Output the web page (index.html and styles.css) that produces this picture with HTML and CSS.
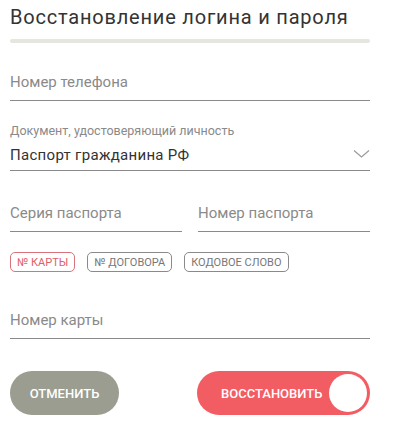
FILE: index.html
```html
<!DOCTYPE html>
<html lang="ru">
  <head>
    <meta charset="UTF-8">
    <meta name="viewport" content="width=device-width, initial-scale=1.0">
    <title>Восстановление логина и пароля</title>
    <link rel="stylesheet" href="styles.css">
  </head>
  <body>
    <div id="all">
      <h1>Восстановление логина и пароля</h1>
      <div class="bar"></div>

      <div class="field field-phone">
        <input type="text" class="inp" placeholder="Номер телефона">
      </div>

      <div class="field field-select">
        <div class="small-label">Документ, удостоверяющий личность</div>
        <div class="select">
          <span>Паспорт гражданина РФ</span>
          <svg class="chevron" width="17" height="8" viewBox="0 0 17 8"><path d="M1 0.5 L8.5 7 L16 0.5" fill="none" stroke="#9a9a9a" stroke-width="1.2"/></svg>
        </div>
      </div>

      <div class="row">
        <div class="field">
          <input type="text" class="inp" placeholder="Серия паспорта">
        </div>
        <div class="field">
          <input type="text" class="inp" placeholder="Номер паспорта">
        </div>
      </div>

      <div class="chips">
        <button class="chip active">№ КАРТЫ</button>
        <button class="chip">№ ДОГОВОРА</button>
        <button class="chip">КОДОВОЕ СЛОВО</button>
      </div>

      <div class="field field-card">
        <input type="text" class="inp" placeholder="Номер карты">
      </div>

      <div class="buttons">
        <button class="btn-cancel">ОТМЕНИТЬ</button>
        <button class="btn-restore">ВОССТАНОВИТЬ<span class="knob"></span></button>
      </div>
    </div>
  </body>
</html>
```

FILE: styles.css
```css
*{
margin:0;
padding:0;
box-sizing:border-box;
}

body{
    background-color:#fff;
    color:#333;
    font-family:Roboto, "Noto Sans", sans-serif;
}

#all{
    width:360px;
    margin-left:10px;
}

h1{
    font-size:20px;
    font-weight:400;
    color:#333;
    line-height:24px;
    padding-top:5px;
    letter-spacing:0.8px;
}

.bar{
    height:4px;
    background-color:#e6e6df;
    border-radius:2px;
    margin-top:10px;
}

.field{
    border-bottom:1px solid #8a8a8a;
}

.inp{
    display:block;
    width:100%;
    border:none;
    outline:none;
    background:none;
    font-family:inherit;
    font-size:15px;
    color:#333;
    height:30px;
    line-height:24px;
    padding:0 0 6px 0;
}

.inp::placeholder{
    color:#8a8a8a;
}

.field-phone{
    margin-top:27px;
}

.field-select{
    margin-top:23px;
}

.small-label{
    font-size:12.5px;
    color:#8a8a8a;
    line-height:14px;
}

.select{
    display:flex;
    justify-content:space-between;
    align-items:center;
    height:24px;
    margin:5px 0 3px 0;
    font-size:15px;
    letter-spacing:0.3px;
    color:#333;
}

.chevron{
    margin-top:-3px;
}

.row{
    display:flex;
    gap:16px;
    margin-top:30px;
}

.row .field{
    flex:1;
}

.chips{
    display:flex;
    gap:12px;
    margin-top:20px;
}

.chip{
    background:#fff;
    border:1px solid #8a8a8a;
    border-radius:5px;
    color:#777;
    font-family:inherit;
    font-size:11px;
    height:20px;
    padding:0 6px;
    cursor:pointer;
}

.chip.active{
    border-color:#d9737b;
    color:#e0606a;
}

.field-card{
    margin-top:36px;
}

.buttons{
    display:flex;
    justify-content:space-between;
    margin-top:32px;
}

.btn-cancel,
.btn-restore{
    height:44px;
    border:none;
    border-radius:22px;
    color:#fff;
    font-family:inherit;
    font-size:13px;
    font-weight:500;
    cursor:pointer;
}

.btn-cancel{
    width:109px;
    background-color:#9a9d8f;
}

.btn-restore{
    width:173px;
    background-color:#f25c63;
    display:flex;
    align-items:center;
    padding-left:24px;
    padding-right:3px;
    justify-content:space-between;
}

.knob{
    width:38px;
    height:38px;
    border-radius:50%;
    background-color:#fff;
}
```
